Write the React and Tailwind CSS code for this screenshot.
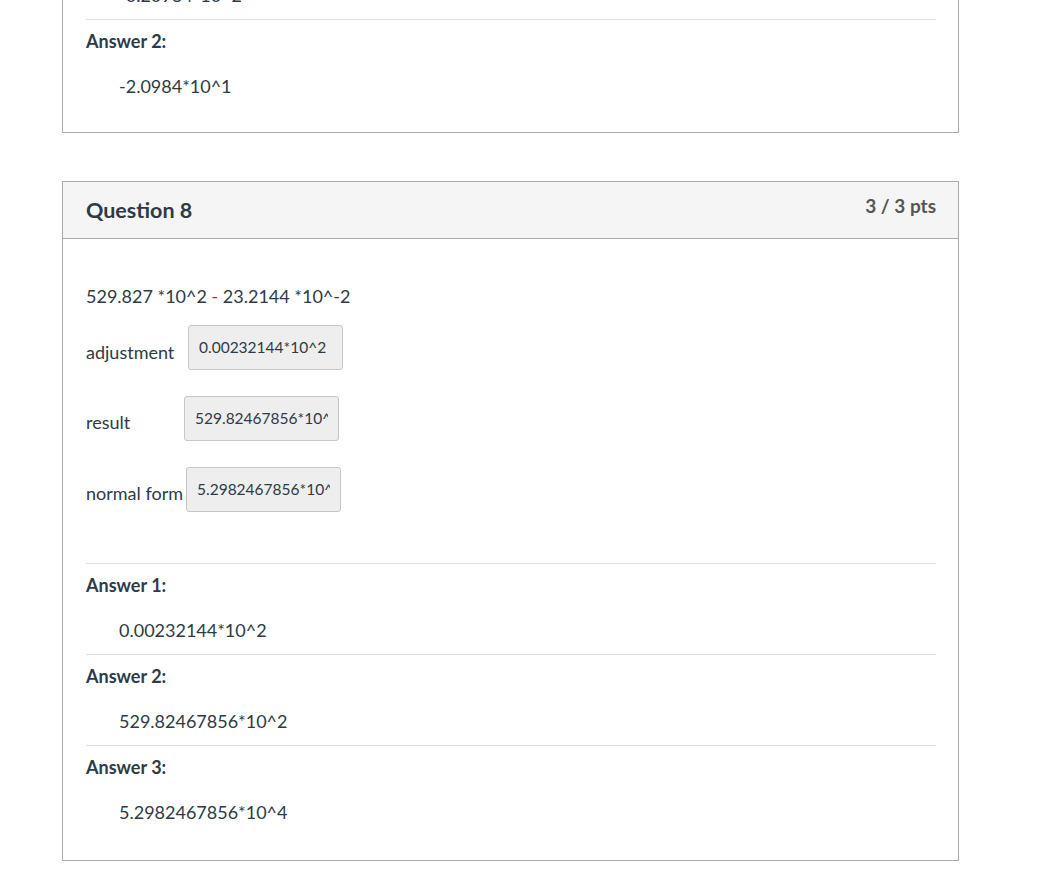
import React from "react";

const font = { fontFamily: "Lato, 'Open Sans', sans-serif" };

function AnswerBlock({ label, value, last, bottomPad }) {
  return (
    <div className="border-t border-[#dddddd]">
      <div className="pt-[11px] text-[18px] leading-5 font-bold text-[#2d3b45]">{label}</div>
      <div
        className={
          "mt-[25px] pl-[33px] text-[18px] leading-5 text-[#2d3b45] " +
          (last ? bottomPad : "pb-[14px]")
        }
      >
        {value}
      </div>
    </div>
  );
}

function Field({ label, value, labelW, mt }) {
  return (
    <div className="flex items-start">
      <div className={"shrink-0 whitespace-nowrap text-[18px] leading-5 text-[#2d3b45] " + labelW + " " + mt}>{label}</div>
      <input
        readOnly
        value={value}
        className="w-[155px] h-[45px] rounded-[3px] border border-[#c7c7c7] bg-[#eeeeee] px-[10px] pb-[1px] text-[15.5px] text-[#2d3b45] outline-none"
        style={font}
      />
    </div>
  );
}

export default function App() {
  return (
    <div className="min-h-[895px] bg-white overflow-hidden" style={font}>
      {/* previous question card (cut off at top) */}
      <div className="-mt-[60px] ml-[62px] w-[897px] border border-[#aaaaaa] pl-[23px] pr-[22px] mb-[48px]">
        <div className="pt-[44px] pb-[14px] pl-[33px] text-[18px] leading-5 text-[#2d3b45]">-0.20984*10^2</div>
        <AnswerBlock label="Answer 2:" value="-2.0984*10^1" last bottomPad="pb-[36px]" />
      </div>

      {/* Question 8 */}
      <div className="ml-[62px] w-[897px] border border-[#aaaaaa]">
        <div className="h-[57px] bg-[#f5f5f5] border-b border-[#aaaaaa] flex items-center justify-between pl-[23px] pr-[22px]">
          <div className="text-[21.5px] leading-7 font-bold text-[#2d3b45]">Question 8</div>
          <div className="self-start mt-[14px] text-[19px] leading-5 font-bold text-[#555555]">3 / 3 pts</div>
        </div>
        <div className="pl-[23px] pr-[22px]">
          <div className="pt-[47px] text-[18px] leading-5 text-[#2d3b45]">
            529.827 *10^2 <span className="text-[#ff0000]">-</span> 23.2144 *10^-2
          </div>
          <div className="mt-[19px] flex flex-col gap-[26px]">
            <Field label="adjustment" value="0.00232144*10^2" labelW="w-[102px]" mt="mt-[17px]" />
            <Field label="result" value="529.82467856*10^2" labelW="w-[98px]" mt="mt-[16px]" />
            <Field label="normal form" value="5.2982467856*10^4" labelW="w-[100px]" mt="mt-[16px]" />
          </div>
          <div className="mt-[51px]">
            <AnswerBlock label="Answer 1:" value="0.00232144*10^2" />
            <AnswerBlock label="Answer 2:" value="529.82467856*10^2" />
            <AnswerBlock label="Answer 3:" value="5.2982467856*10^4" last bottomPad="pb-[38px]" />
          </div>
        </div>
      </div>
    </div>
  );
}
